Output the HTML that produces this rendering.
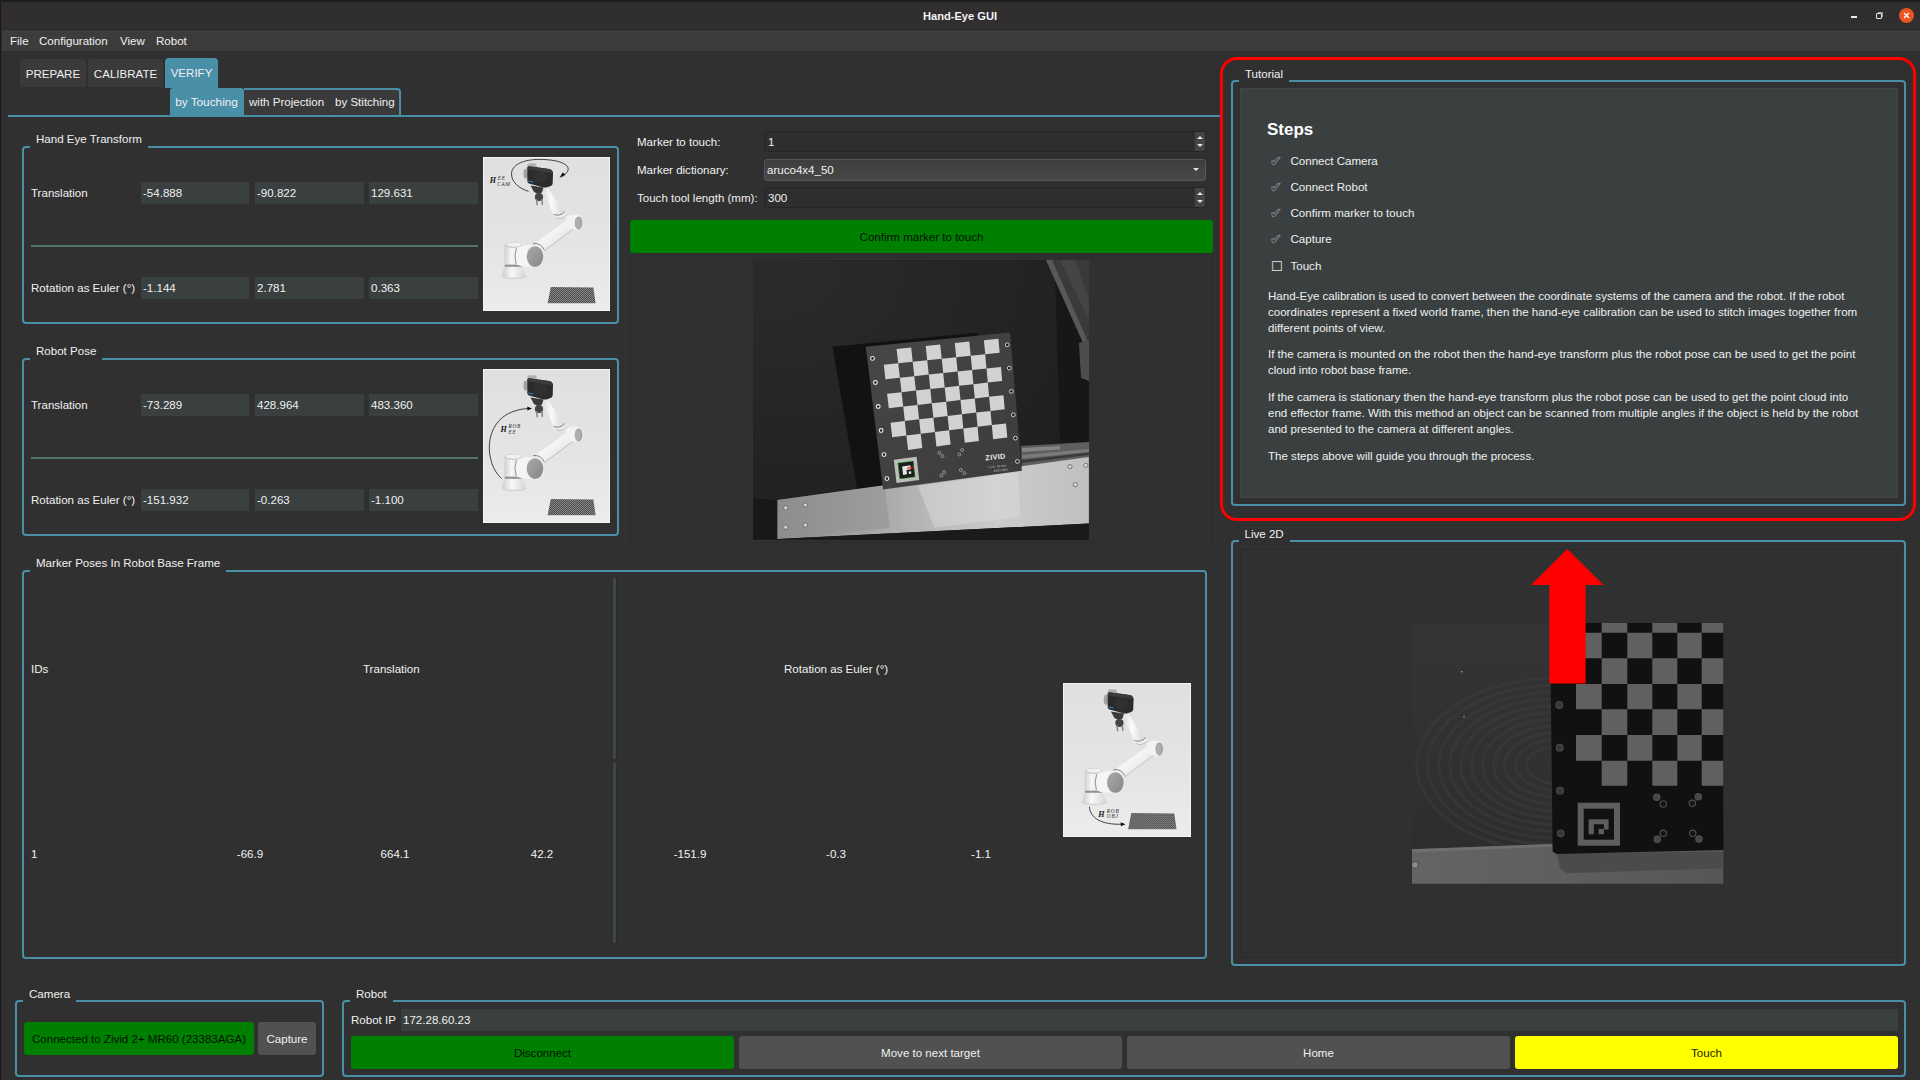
<!DOCTYPE html>
<html lang="en">
<head>
<meta charset="utf-8">
<title>Hand-Eye GUI</title>
<style>
*{box-sizing:border-box;margin:0;padding:0}
html,body{width:1920px;height:1080px;overflow:hidden}
body{position:relative;background:#303030;color:#f0f0f0;font-family:"Liberation Sans",sans-serif;font-size:11.55px;line-height:14px}
.abs{position:absolute}
.t{position:absolute;white-space:nowrap;line-height:14px}
#titlebar{left:0;top:0;width:1920px;height:30px;background:#302e2f;border-top:2px solid #1d1d1d;border-bottom:1px solid #262626}
#titlebar .ttl{left:0;width:1920px;top:7px;text-align:center;font-weight:bold;font-size:11.1px;color:#f4f4f4}
#menubar{left:0;top:30px;width:1920px;height:21px;background:#3c3c3c}
#edge{left:0;top:0;width:1px;height:1080px;background:#1f1520;box-shadow:1px 0 0 #2b2a2d}
.tab{position:absolute;background:#3a3a3a;border-radius:3px 3px 0 0;font-size:11.55px;text-align:center;color:#f0f0f0}
.tab.sel{background:#4a8fa8}
.gb{position:absolute;border:2px solid #4a8fa8;border-radius:4px}
.gbt{position:absolute;background:#303030;padding:0 6px;height:18px;line-height:14px;white-space:nowrap;color:#f0f0f0}
.fld{position:absolute;background:#3a4040;height:22px;line-height:22px;padding-left:2px;color:#f0f0f0;white-space:nowrap}
.sep{position:absolute;height:2px;background:#54726f}
.btn{position:absolute;border-radius:3px;text-align:center;white-space:nowrap}
.gray{background:#515151;color:#f0f0f0}
.green{background:#008000;color:#031003}
.yellow{background:#ffff00;color:#1a1a00}
.spin{position:absolute;background:#2e2e2e;border:1px solid #262626;border-radius:2px;height:21px;line-height:21px;padding-left:3px}
.spin .sb{position:absolute;right:0;top:0;width:10px;height:19px;background:#454545;border-radius:0 2px 2px 0}
.tri-u{position:absolute;width:0;height:0;border-left:3px solid transparent;border-right:3px solid transparent;border-bottom:3px solid #e6e6e6}
.tri-d{position:absolute;width:0;height:0;border-left:3px solid transparent;border-right:3px solid transparent;border-top:3px solid #e6e6e6}
.p{position:absolute;left:1268px;width:640px;white-space:nowrap;line-height:16px;color:#f0f0f0}
.step{position:absolute;left:1290.5px;white-space:nowrap}
.chk{position:absolute;left:1270px;color:#3a4040;-webkit-text-stroke:0.7px #8f9494;font-family:"DejaVu Sans",sans-serif;font-size:14px}
</style>
</head>
<body>
<!--DEFS--><svg width="0" height="0" style="position:absolute">
<defs>
<linearGradient id="rbg" x1="0" y1="0" x2="0" y2="1"><stop offset="0" stop-color="#e0e0e0"/><stop offset="0.55" stop-color="#e4e4e4"/><stop offset="1" stop-color="#ececec"/></linearGradient>
<linearGradient id="tube" x1="0" y1="0" x2="1" y2="1"><stop offset="0" stop-color="#ffffff"/><stop offset="0.5" stop-color="#f2f2f2"/><stop offset="1" stop-color="#cdcdcd"/></linearGradient>
<linearGradient id="tube2" x1="0" y1="0" x2="1" y2="0"><stop offset="0" stop-color="#dcdcdc"/><stop offset="0.4" stop-color="#fafafa"/><stop offset="1" stop-color="#d2d2d2"/></linearGradient>
<linearGradient id="col" x1="0" y1="0" x2="1" y2="0"><stop offset="0" stop-color="#cfcfcf"/><stop offset="0.4" stop-color="#f8f8f8"/><stop offset="1" stop-color="#d6d6d6"/></linearGradient>
<linearGradient id="cap" x1="0" y1="0" x2="1" y2="1"><stop offset="0" stop-color="#a9a9a9"/><stop offset="1" stop-color="#868686"/></linearGradient>
<pattern id="mesh" width="2" height="2" patternUnits="userSpaceOnUse"><rect width="2" height="2" fill="#4e4e4e"/><rect width="1" height="1" fill="#858585"/><rect x="1" y="1" width="1" height="1" fill="#858585"/></pattern>
<symbol id="robot" viewBox="0 0 127 154">
  <rect x="0" y="0" width="127" height="154" fill="#f4f4f4"/>
  <rect x="1" y="1" width="125" height="152" fill="url(#rbg)"/>
  <ellipse cx="31" cy="119.6" rx="13" ry="2.6" fill="#d6d6d6"/>
  <!-- mat -->
  <polygon points="64.2,147.4 112.8,147.4 110.4,130.4 67.8,129.8" fill="#f0f0f0"/>
  <polygon points="64.6,146.2 112.6,146.2 110.4,130.6 67.8,129.9" fill="url(#mesh)"/>
  <!-- base skirt -->
  <path d="M21.1,109.5 L39.3,109.5 L42.8,118 Q42.4,120.6 31,120.6 Q19.8,120.6 19.4,118 Z" fill="url(#col)"/>
  <rect x="21.6" y="107.2" width="17.2" height="2.6" rx="1" fill="#8f8f8f"/>
  <!-- base column -->
  <path d="M21.5,88 L38.9,88 L38.9,107.6 L21.5,107.6 Z" fill="url(#col)"/>
  <ellipse cx="30.2" cy="88" rx="8.7" ry="2.9" fill="#c9c9c9"/>
  <ellipse cx="30.6" cy="87.6" rx="7.6" ry="2.1" fill="#f1f1f1"/>
  <!-- shoulder horizontal cylinder -->
  <path d="M32.5,91.5 Q40,87 52,88.6 L52,109.6 Q40,110.5 32.5,107 Z" fill="#f5f5f5"/>
  <path d="M33.4,91.2 Q30.6,99 33.2,107.2" fill="none" stroke="#7a7a7a" stroke-width="0.8"/>
  <!-- upper arm -->
  <path d="M52.5,86 L85.6,61.8 L91.8,71 L60,94.5 Z" fill="url(#tube)"/>
  <path d="M60,94.5 L91.8,71" stroke="#bdbdbd" stroke-width="0.9"/>
  <!-- shoulder cap -->
  <ellipse cx="52.2" cy="99.2" rx="9.2" ry="11.2" fill="#efefef"/>
  <ellipse cx="52" cy="99.6" rx="8.3" ry="10.4" fill="url(#cap)"/>
  <path d="M50.2,86.6 Q57.6,85.6 61.2,92.6" fill="none" stroke="#666" stroke-width="0.8"/>
  <!-- elbow -->
  <path d="M82.5,60.5 Q88,55.5 96.5,58.6 L97.6,72 Q91,74.6 86,70.6 Z" fill="#f3f3f3"/>
  <ellipse cx="95.5" cy="66" rx="3.7" ry="6.4" fill="#9c9c9c"/>
  <ellipse cx="94.9" cy="66" rx="3" ry="5.7" fill="#aeaeae"/>
  <!-- forearm (tapered) -->
  <path d="M59.3,32.6 L65,31.2 L82,57.2 L73.2,63.2 Z" fill="url(#tube2)"/>
  <path d="M72,60.2 Q78,64.6 85,58 L82.3,54 Q77,59.6 70.6,57.2 Z" fill="#ededed"/>
  <path d="M70.9,57.4 Q77,60 82.2,54.4" fill="none" stroke="#777" stroke-width="0.9"/>
  <path d="M72.6,60.6 Q78.2,63.6 84.4,57.6" fill="none" stroke="#999" stroke-width="0.6"/>
  <!-- gripper -->
  <path d="M47.5,28.6 L60.5,30.4 L59,35.5 L55,37 L51,35 Z" fill="#3a3a3a"/>
  <circle cx="56" cy="40" r="4.1" fill="#444"/>
  <path d="M52.6,42 L54.4,42.4 L55,48.2 L53.6,48.4 Z M58,42.6 L59.6,42 L60.2,47.8 L58.8,48.2 Z" fill="#7f8a96"/>
  <!-- mount -->
  <rect x="44.4" y="6.2" width="9.2" height="5" rx="2" fill="#b2b2b2"/>
  <ellipse cx="42.6" cy="16.8" rx="2.2" ry="5" fill="#a2a2a2"/>
  <!-- camera -->
  <path d="M46.2,9.2 L66,12 Q69.8,12.8 70,16.2 L69.7,26.6 Q69.5,28.6 67,29.2 L64,30.3 Q62,30.8 59.6,30.2 L46,26.4 Q44.3,25.8 44.3,24 L44.3,11 Q44.6,9 46.2,9.2 Z" fill="#2b2b2b"/>
  <ellipse cx="57.5" cy="20.5" rx="6.5" ry="6" fill="#313131"/>
  <path d="M46.2,9.2 L66,12 Q69.8,12.8 70,16.2 L57,14.6 L44.3,12.2 L44.3,11 Q44.6,9 46.2,9.2 Z" fill="#3c3c3c"/>
  <rect x="45.2" y="23.6" width="5.4" height="0.9" fill="#3b82b4" transform="rotate(10 45.2 23.6)"/>
</symbol>
</defs>
</svg>
<!--/DEFS-->
<!-- window chrome -->
<div id="titlebar" class="abs">
  <div class="t ttl">Hand-Eye GUI</div>
  <!-- window buttons -->
  <div class="abs" style="left:1850.5px;top:14.3px;width:6.5px;height:1.5px;background:#e8e8e8"></div>
  <div class="abs" style="left:1876px;top:11px;width:6px;height:6px;border:1.5px solid #e8e8e8;border-radius:1px"></div>
  <div class="abs" style="left:1878px;top:9.5px;width:5px;height:5px;border-top:1px solid #9a9a9a;border-right:1px solid #9a9a9a"></div>
  <div class="abs" style="left:1899px;top:6px;width:15px;height:15px;border-radius:50%;background:#e95420"></div>
  <svg class="abs" style="left:1899px;top:6px" width="15" height="15" viewBox="0 0 15 15"><path d="M5 5 L10 10 M10 5 L5 10" stroke="#fff" stroke-width="1.4" fill="none"/></svg>
</div>
<div id="menubar" class="abs">
  <div class="t" style="left:10px;top:4px">File</div>
  <div class="t" style="left:39px;top:4px">Configuration</div>
  <div class="t" style="left:120px;top:4px">View</div>
  <div class="t" style="left:156px;top:4px">Robot</div>
</div>
<div id="edge" class="abs"></div>

<!-- main tabs -->
<div class="tab" style="left:20px;top:59px;width:66px;height:28px;line-height:30px">PREPARE</div>
<div class="tab" style="left:88px;top:59px;width:75px;height:28px;line-height:30px">CALIBRATE</div>
<div class="tab sel" style="left:165px;top:58px;width:53px;height:30px;line-height:31px;border-radius:4px 4px 0 0">VERIFY</div>
<!-- sub tabs -->
<div class="abs" style="left:8px;top:115px;width:1214px;height:2px;background:#4a8fa8"></div>
<div class="abs" style="left:244px;top:88px;width:157px;height:27px;background:#3a3a3a;border-top:2px solid #4a8fa8;border-right:2px solid #4a8fa8;border-radius:0 4px 0 0"></div>
<div class="abs" style="left:329px;top:90px;width:1px;height:25px;background:#363636"></div>
<div class="tab sel" style="left:170px;top:88px;width:74px;height:28px;line-height:28px;font-size:11.8px;text-indent:-1px">by Touching</div>
<div class="t" style="left:249px;top:95px">with Projection</div>
<div class="t" style="left:335px;top:95px">by Stitching</div>

<!-- Hand Eye Transform -->
<div class="gb" style="left:22px;top:146px;width:597px;height:178px"></div>
<div class="gbt" style="left:30px;top:132px">Hand Eye Transform</div>
<div class="t" style="left:31px;top:186px">Translation</div>
<div class="fld" style="left:141px;top:182px;width:108px">-54.888</div>
<div class="fld" style="left:255px;top:182px;width:109px">-90.822</div>
<div class="fld" style="left:369px;top:182px;width:109px">129.631</div>
<div class="sep" style="left:31px;top:244.5px;width:447px"></div>
<div class="t" style="left:31px;top:281px">Rotation as Euler (°)</div>
<div class="fld" style="left:141px;top:277px;width:108px">-1.144</div>
<div class="fld" style="left:255px;top:277px;width:109px">2.781</div>
<div class="fld" style="left:369px;top:277px;width:109px">0.363</div>
<!--ROBOT1--><svg class="abs" style="left:483px;top:157px" width="127" height="154" viewBox="0 0 127 154"><use href="#robot" width="127" height="154"/>
<path d="M45.6,34.4 C36,31.5 28.5,25 28.5,17 C28.5,8 40,2.4 56.3,2.4 C72,2.4 85.2,6 85.2,12 C85.2,15 82,18 78.6,19.8" fill="none" stroke="#1a1a1a" stroke-width="0.8"/><polygon points="76.4,21 82.4,17.6 79.6,15.6" fill="#111"/>
<g opacity="0.97"><text x="6.8" y="26.4" font-family="'Liberation Serif',serif" font-weight="bold" font-style="italic" font-size="8" fill="#111">H</text><text x="14.8" y="22.6" font-family="'Liberation Serif',serif" font-style="italic" font-size="5.2" letter-spacing="0.9" fill="#1c1c1c">EE</text><text x="14.2" y="28.6" font-family="'Liberation Serif',serif" font-style="italic" font-size="5.2" letter-spacing="0.9" fill="#1c1c1c">CAM</text></g></svg><!--/ROBOT1-->

<!-- Robot Pose -->
<div class="gb" style="left:22px;top:358px;width:597px;height:178px"></div>
<div class="gbt" style="left:30px;top:344px">Robot Pose</div>
<div class="t" style="left:31px;top:398px">Translation</div>
<div class="fld" style="left:141px;top:394px;width:108px">-73.289</div>
<div class="fld" style="left:255px;top:394px;width:109px">428.964</div>
<div class="fld" style="left:369px;top:394px;width:109px">483.360</div>
<div class="sep" style="left:31px;top:456.5px;width:447px"></div>
<div class="t" style="left:31px;top:493px">Rotation as Euler (°)</div>
<div class="fld" style="left:141px;top:489px;width:108px">-151.932</div>
<div class="fld" style="left:255px;top:489px;width:109px">-0.263</div>
<div class="fld" style="left:369px;top:489px;width:109px">-1.100</div>
<!--ROBOT2--><svg class="abs" style="left:483px;top:369px" width="127" height="154" viewBox="0 0 127 154"><use href="#robot" width="127" height="154"/>
<path d="M18.5,109.5 C2,95 -1,54 30,42.5 Q38,39.6 46,39.4" fill="none" stroke="#1a1a1a" stroke-width="0.8"/><polygon points="49,39.4 44.2,37.4 44.4,41.4" fill="#111"/>
<g opacity="0.97"><text x="17.5" y="62.8" font-family="'Liberation Serif',serif" font-weight="bold" font-style="italic" font-size="8" fill="#111">H</text><text x="25.4" y="59.2" font-family="'Liberation Serif',serif" font-style="italic" font-size="5.2" letter-spacing="0.9" fill="#1c1c1c">ROB</text><text x="25.4" y="64.6" font-family="'Liberation Serif',serif" font-style="italic" font-size="5.2" letter-spacing="0.9" fill="#1c1c1c">EE</text></g></svg><!--/ROBOT2-->

<!-- Marker form -->
<div class="t" style="left:637px;top:135px">Marker to touch:</div>
<div class="spin" style="left:764px;top:131px;width:442px">1<div class="sb"><div class="tri-u" style="left:2px;top:4px"></div><div class="tri-d" style="left:2px;top:12px"></div></div></div>
<div class="t" style="left:637px;top:163px">Marker dictionary:</div>
<div class="abs" style="left:764px;top:159px;width:442px;height:22px;border:1px solid #565656;border-radius:3px;background:linear-gradient(#3e3e3e,#484848);line-height:20px;padding-left:2px">aruco4x4_50<div class="tri-d" style="right:6px;top:8px"></div></div>
<div class="t" style="left:637px;top:191px">Touch tool length (mm):</div>
<div class="spin" style="left:764px;top:187px;width:442px">300<div class="sb"><div class="tri-u" style="left:2px;top:4px"></div><div class="tri-d" style="left:2px;top:12px"></div></div></div>
<div class="btn green" style="left:630px;top:220px;width:583px;height:33px;line-height:34px">Confirm marker to touch</div>
<div class="abs" style="left:630px;top:257px;width:583px;height:286px;border:1px solid #2b2b2b;background:#303030"></div>
<!--CAMIMG--><svg class="abs" style="left:753px;top:260px" width="336" height="280" viewBox="753 260 336 280">
<defs><radialGradient id="cbg" cx="0.08" cy="0.02" r="1.15"><stop offset="0" stop-color="#2b2b2b"/><stop offset="0.4" stop-color="#262626"/><stop offset="1" stop-color="#1e1e1e"/></radialGradient><linearGradient id="plate" x1="0" y1="0" x2="1" y2="0"><stop offset="0" stop-color="#8a8a8a"/><stop offset="0.3" stop-color="#a6a6a6"/><stop offset="0.7" stop-color="#cbcbcb"/><stop offset="1" stop-color="#c0c0c0"/></linearGradient><linearGradient id="brd" x1="0" y1="0" x2="1" y2="1"><stop offset="0" stop-color="#474747"/><stop offset="1" stop-color="#3b3b3b"/></linearGradient></defs>
<rect x="753" y="260" width="336" height="280" fill="url(#cbg)"/>
<polygon points="1055.0,268.0 1089.0,268.0 1089.0,444.0 1060.0,446.0" fill="#171717"/>
<polygon points="1046.0,260.0 1089.0,260.0 1089.0,356.0" fill="#3a3a3a"/>
<polygon points="1046.0,260.0 1052.0,260.0 1089.0,344.0 1089.0,356.0" fill="#585858"/>
<polygon points="1060.0,260.0 1075.0,260.0 1089.0,300.0 1089.0,320.0" fill="#444"/>
<polygon points="1079.0,343.0 1089.0,340.0 1089.0,381.0 1081.0,378.0" fill="#4d4d4d"/>
<polygon points="1021.0,446.0 1089.0,442.0 1089.0,457.0 1022.0,470.0" fill="#5e5e5e"/>
<polygon points="1022.0,448.0 1060.0,446.0 1060.0,449.5 1022.0,452.0" fill="#858585"/>
<polygon points="1022.0,455.0 1089.0,449.0 1089.0,452.0 1022.0,458.5" fill="#7a7a7a"/>
<polygon points="1022.0,460.0 1089.0,452.5 1089.0,455.0 1022.0,463.0" fill="#3a3a3a"/>
<polygon points="832.5,346.7 870.6,343.1 977.5,332.5 978.9,341.7 884.4,489.4 858.1,494.4" fill="#121212"/>
<polygon points="753.3,498.6 777.5,500.0 777.5,539.4 753.3,539.4" fill="#181818"/>
<polygon points="777.5,500.0 1088.9,456.9 1088.9,523.6 777.5,538.9" fill="url(#plate)"/>
<polygon points="777.5,538.9 1088.9,523.6 1088.9,539.4 777.5,539.4" fill="#1a1a1a"/>
<polygon points="917.8,486.1 1017.8,472.2 1020.6,516.7 934.4,527.8" fill="#dcdcdc" opacity="0.5"/>
<polygon points="777.5,500.0 884.4,485.6 890.0,527.8 777.5,538.9" fill="#8f8f8f" opacity="0.5"/>
<circle cx="785.8" cy="507.8" r="2.1" fill="#d8d8d8" stroke="#6a6a6a" stroke-width="0.9"/>
<circle cx="805.3" cy="505.0" r="2.1" fill="#d8d8d8" stroke="#6a6a6a" stroke-width="0.9"/>
<circle cx="785.8" cy="527.2" r="2.1" fill="#d8d8d8" stroke="#6a6a6a" stroke-width="0.9"/>
<circle cx="805.3" cy="525.0" r="2.1" fill="#d8d8d8" stroke="#6a6a6a" stroke-width="0.9"/>
<circle cx="1070.0" cy="466.7" r="2.1" fill="#d8d8d8" stroke="#6a6a6a" stroke-width="0.9"/>
<circle cx="1085.8" cy="465.3" r="2.1" fill="#d8d8d8" stroke="#6a6a6a" stroke-width="0.9"/>
<circle cx="1075.3" cy="484.7" r="2.1" fill="#d8d8d8" stroke="#6a6a6a" stroke-width="0.9"/>
<polygon points="865.8,346.7 1010.0,332.5 1021.9,470.8 883.1,489.4" fill="url(#brd)"/>
<path d="M896.6,348.9L911.2,347.4L912.7,361.8L898.2,363.3ZM925.7,346.0L940.2,344.5L941.7,358.8L927.2,360.3ZM954.8,343.1L969.3,341.6L970.7,355.8L956.2,357.3ZM983.9,340.2L998.4,338.7L999.7,352.8L985.2,354.3ZM883.8,364.8L898.2,363.3L899.9,377.7L885.4,379.3ZM912.7,361.8L927.2,360.3L928.8,374.6L914.3,376.2ZM941.7,358.8L956.2,357.3L957.6,371.6L943.2,373.1ZM970.7,355.8L985.2,354.3L986.5,368.5L972.1,370.0ZM899.9,377.7L914.3,376.2L915.9,390.6L901.5,392.2ZM928.8,374.6L943.2,373.1L944.7,387.4L930.3,389.0ZM957.6,371.6L972.1,370.0L973.4,384.2L959.1,385.8ZM986.5,368.5L1001.0,367.0L1002.2,381.1L987.8,382.6ZM887.1,393.7L901.5,392.2L903.2,406.6L888.8,408.2ZM915.9,390.6L930.3,389.0L931.8,403.3L917.5,405.0ZM944.7,387.4L959.1,385.8L960.5,400.1L946.2,401.7ZM973.4,384.2L987.8,382.6L989.1,396.8L974.8,398.4ZM903.2,406.6L917.5,405.0L919.1,419.3L904.8,421.0ZM931.8,403.3L946.2,401.7L947.6,416.0L933.4,417.7ZM960.5,400.1L974.8,398.4L976.2,412.6L961.9,414.3ZM989.1,396.8L1003.5,395.2L1004.7,409.3L990.5,411.0ZM890.5,422.7L904.8,421.0L906.4,435.5L892.2,437.2ZM919.1,419.3L933.4,417.7L934.9,432.0L920.7,433.7ZM947.6,416.0L961.9,414.3L963.3,428.6L949.1,430.3ZM976.2,412.6L990.5,411.0L991.8,425.1L977.6,426.8ZM906.4,435.5L920.7,433.7L922.3,448.1L908.1,449.9ZM934.9,432.0L949.1,430.3L950.6,444.6L936.4,446.4ZM963.3,428.6L977.6,426.8L978.9,441.0L964.8,442.8ZM991.8,425.1L1006.0,423.4L1007.3,437.5L993.1,439.3Z" fill="#d2d2d2"/>
<circle cx="872.5" cy="358.4" r="1.9" fill="#1c1c1c" stroke="#f0f0f0" stroke-width="1.1"/>
<circle cx="1007.2" cy="344.8" r="1.9" fill="#1c1c1c" stroke="#d4d4d4" stroke-width="1"/>
<circle cx="875.4" cy="382.5" r="1.9" fill="#1c1c1c" stroke="#f0f0f0" stroke-width="1.1"/>
<circle cx="1009.3" cy="368.1" r="1.9" fill="#1c1c1c" stroke="#d4d4d4" stroke-width="1"/>
<circle cx="878.2" cy="406.5" r="1.9" fill="#1c1c1c" stroke="#f0f0f0" stroke-width="1.1"/>
<circle cx="1011.3" cy="391.4" r="1.9" fill="#1c1c1c" stroke="#d4d4d4" stroke-width="1"/>
<circle cx="881.1" cy="430.5" r="1.9" fill="#1c1c1c" stroke="#f0f0f0" stroke-width="1.1"/>
<circle cx="1013.3" cy="414.8" r="1.9" fill="#1c1c1c" stroke="#d4d4d4" stroke-width="1"/>
<circle cx="884.0" cy="454.6" r="1.9" fill="#1c1c1c" stroke="#f0f0f0" stroke-width="1.1"/>
<circle cx="1015.4" cy="438.1" r="1.9" fill="#1c1c1c" stroke="#d4d4d4" stroke-width="1"/>
<circle cx="886.9" cy="478.6" r="1.9" fill="#1c1c1c" stroke="#f0f0f0" stroke-width="1.1"/>
<circle cx="1017.4" cy="461.4" r="1.9" fill="#1c1c1c" stroke="#d4d4d4" stroke-width="1"/>
<circle cx="939.4" cy="452.8" r="1.5" fill="none" stroke="#b5b5b5" stroke-width="0.7"/>
<circle cx="942.5" cy="456.1" r="1.5" fill="none" stroke="#b5b5b5" stroke-width="0.7"/>
<circle cx="959.4" cy="454.4" r="1.5" fill="none" stroke="#b5b5b5" stroke-width="0.7"/>
<circle cx="962.2" cy="450.0" r="1.5" fill="none" stroke="#b5b5b5" stroke-width="0.7"/>
<circle cx="944.2" cy="472.2" r="1.5" fill="none" stroke="#b5b5b5" stroke-width="0.7"/>
<circle cx="941.4" cy="475.6" r="1.5" fill="none" stroke="#b5b5b5" stroke-width="0.7"/>
<circle cx="960.8" cy="470.0" r="1.5" fill="none" stroke="#b5b5b5" stroke-width="0.7"/>
<circle cx="964.4" cy="473.1" r="1.5" fill="none" stroke="#b5b5b5" stroke-width="0.7"/>
<polygon points="893.8,459.7 916.6,456.8 919.2,480.1 896.5,483.1" fill="#bdbdbd" />
<polygon points="897.8,462.9 913.4,460.9 915.2,476.9 899.7,478.9" fill="#1d1d1d" />
<polygon points="902.1,466.4 910.4,465.3 910.8,469.3 906.5,469.9 907.0,474.3 903.1,474.9" fill="#e4e4e4" />
<polygon points="908.6,471.6 911.1,471.3 911.3,473.8 908.9,474.1" fill="#e4e4e4" />
<polygon points="897.8,462.9 913.4,460.9 915.2,476.9 899.7,478.9" fill="none" stroke="#18d018" stroke-width="0.9" stroke-dasharray="1.6 1.6"/>
<text x="906.9" y="469.3" transform="rotate(-6 906.9 469.3)" font-family="'Liberation Sans',sans-serif" font-size="3.8" font-weight="bold" fill="#ff2020">id=1</text>
<g transform="translate(985.6 460.6) rotate(-6)"><text x="0" y="0" font-family="'Liberation Sans',sans-serif" font-size="7.4" font-weight="bold" fill="#ececec" letter-spacing="0.3">ZIVID</text><text x="1.5" y="8" font-family="'Liberation Sans',sans-serif" font-size="3" fill="#cfcfcf">7 x 8 - 30 mm</text><text x="6.8" y="12.2" font-family="'Liberation Sans',sans-serif" font-size="3" fill="#cfcfcf">ZVD-CB01</text></g>
</svg><!--/CAMIMG-->

<!-- Marker Poses -->
<div class="gb" style="left:22px;top:570px;width:1185px;height:389px"></div>
<div class="gbt" style="left:30px;top:556px">Marker Poses In Robot Base Frame</div>
<div class="abs" style="left:613px;top:578px;width:3px;height:181px;background:#3c4747;border-right:0;box-shadow:1px 0 0 #2a2a2a"></div>
<div class="abs" style="left:613px;top:763px;width:3px;height:180px;background:#3c4747;box-shadow:1px 0 0 #2a2a2a"></div>
<div class="t" style="left:31px;top:662px">IDs</div>
<div class="t" style="left:363px;top:662px">Translation</div>
<div class="t" style="left:784px;top:662px">Rotation as Euler (°)</div>
<div class="t" style="left:31px;top:847px">1</div>
<div class="t" style="left:200px;top:847px;width:100px;text-align:center">-66.9</div>
<div class="t" style="left:345px;top:847px;width:100px;text-align:center">664.1</div>
<div class="t" style="left:492px;top:847px;width:100px;text-align:center">42.2</div>
<div class="t" style="left:640px;top:847px;width:100px;text-align:center">-151.9</div>
<div class="t" style="left:786px;top:847px;width:100px;text-align:center">-0.3</div>
<div class="t" style="left:931px;top:847px;width:100px;text-align:center">-1.1</div>
<!--ROBOT3--><svg class="abs" style="left:1063px;top:683px" width="128" height="154" viewBox="0 0 127 154" preserveAspectRatio="none"><use href="#robot" width="127" height="154"/>
<path d="M26.2,123.7 C27,135 38,142 59,141.2" fill="none" stroke="#1a1a1a" stroke-width="0.8"/><polygon points="62,141.2 57.2,139.2 57.4,143.2" fill="#111"/>
<g opacity="0.97"><text x="35" y="133.8" font-family="'Liberation Serif',serif" font-weight="bold" font-style="italic" font-size="8" fill="#111">H</text><text x="43.4" y="130" font-family="'Liberation Serif',serif" font-style="italic" font-size="5.2" letter-spacing="0.9" fill="#1c1c1c">ROB</text><text x="43.4" y="135.4" font-family="'Liberation Serif',serif" font-style="italic" font-size="5.2" letter-spacing="0.9" fill="#1c1c1c">OBJ</text></g></svg><!--/ROBOT3-->

<!-- Camera -->
<div class="gb" style="left:15px;top:1000px;width:309px;height:77px"></div>
<div class="gbt" style="left:23px;top:987px">Camera</div>
<div class="btn green" style="left:24px;top:1022px;width:230px;height:33px;line-height:34px">Connected to Zivid 2+ MR60 (23383AGA)</div>
<div class="btn gray" style="left:258px;top:1022px;width:58px;height:33px;line-height:34px">Capture</div>

<!-- Robot -->
<div class="gb" style="left:342px;top:1000px;width:1564px;height:77px"></div>
<div class="gbt" style="left:350px;top:987px">Robot</div>
<div class="t" style="left:351px;top:1013px">Robot IP</div>
<div class="fld" style="left:401px;top:1009px;width:1497px">172.28.60.23</div>
<div class="btn green" style="left:351px;top:1036px;width:383px;height:33px;line-height:34px">Disconnect</div>
<div class="btn gray" style="left:739px;top:1036px;width:383px;height:33px;line-height:34px">Move to next target</div>
<div class="btn gray" style="left:1127px;top:1036px;width:383px;height:33px;line-height:34px">Home</div>
<div class="btn yellow" style="left:1515px;top:1036px;width:383px;height:33px;line-height:34px">Touch</div>

<!-- Tutorial -->
<div class="gb" style="left:1231px;top:80px;width:675px;height:426px"></div>
<div class="gbt" style="left:1239px;top:66.6px">Tutorial</div>
<div class="abs" style="left:1240px;top:88px;width:658px;height:410px;background:#3a4040;border:1px solid #3f4646"></div>
<div class="t" style="left:1267px;top:119.5px;font-size:17px;font-weight:bold;line-height:20px;color:#fff">Steps</div>
<div class="chk t" style="top:154px">✔</div><div class="step t" style="top:154px">Connect Camera</div>
<div class="chk t" style="top:180px">✔</div><div class="step t" style="top:180px">Connect Robot</div>
<div class="chk t" style="top:206px">✔</div><div class="step t" style="top:206px">Confirm marker to touch</div>
<div class="chk t" style="top:232px">✔</div><div class="step t" style="top:232px">Capture</div>
<div class="t" style="left:1271px;top:260px;font-family:'DejaVu Sans',sans-serif;font-size:13px;color:#ececec">☐</div><div class="step t" style="top:259px">Touch</div>
<div class="p" style="top:288px">Hand-Eye calibration is used to convert between the coordinate systems of the camera and the robot. If the robot<br>coordinates represent a fixed world frame, then the hand-eye calibration can be used to stitch images together from<br>different points of view.</div>
<div class="p" style="top:346.4px">If the camera is mounted on the robot then the hand-eye transform plus the robot pose can be used to get the point<br>cloud into robot base frame.</div>
<div class="p" style="top:389px">If the camera is stationary then the hand-eye transform plus the robot pose can be used to get the point cloud into<br>end effector frame. With this method an object can be scanned from multiple angles if the object is held by the robot<br>and presented to the camera at different angles.</div>
<div class="p" style="top:447.5px">The steps above will guide you through the process.</div>

<!-- Live 2D -->
<div class="gb" style="left:1231px;top:540px;width:675px;height:426px"></div>
<div class="gbt" style="left:1238.5px;top:527px">Live 2D</div>
<div class="abs" style="left:1240px;top:549px;width:658px;height:409px;border:1px solid #2a2a2a"></div>
<!--LIVEIMG--><svg class="abs" style="left:1412px;top:623px" width="312" height="261" viewBox="1412 623 312 261">
<defs><linearGradient id="lbg" x1="0" y1="0" x2="0" y2="1"><stop offset="0" stop-color="#343434"/><stop offset="0.5" stop-color="#313131"/><stop offset="1" stop-color="#2c2c2c"/></linearGradient><linearGradient id="ltab" x1="0" y1="0" x2="1" y2="0"><stop offset="0" stop-color="#646464"/><stop offset="0.5" stop-color="#5e5e5e"/><stop offset="1" stop-color="#565656"/></linearGradient><clipPath id="lclip"><rect x="1412" y="623" width="140" height="230"/></clipPath></defs>
<rect x="1412" y="623" width="312" height="261" fill="url(#lbg)"/>
<g clip-path="url(#lclip)" fill="none" stroke="#3c3c3c" stroke-opacity="0.5"><ellipse cx="1556.7" cy="765.0" rx="30.0" ry="18.6" stroke-width="3.2"/><ellipse cx="1556.7" cy="765.0" rx="41.0" ry="25.4" stroke-width="3.2"/><ellipse cx="1556.7" cy="765.0" rx="52.0" ry="32.2" stroke-width="3.2"/><ellipse cx="1556.7" cy="765.0" rx="63.0" ry="39.1" stroke-width="3.2"/><ellipse cx="1556.7" cy="765.0" rx="74.0" ry="45.9" stroke-width="3.2"/><ellipse cx="1556.7" cy="765.0" rx="85.0" ry="52.7" stroke-width="3.2"/><ellipse cx="1556.7" cy="765.0" rx="96.0" ry="59.5" stroke-width="3.2"/><ellipse cx="1556.7" cy="765.0" rx="107.0" ry="66.3" stroke-width="3.2"/><ellipse cx="1556.7" cy="765.0" rx="118.0" ry="73.2" stroke-width="3.2"/><ellipse cx="1556.7" cy="765.0" rx="129.0" ry="80.0" stroke-width="3.2"/><ellipse cx="1556.7" cy="765.0" rx="140.0" ry="86.8" stroke-width="3.2"/></g>
<polygon points="1412.0,849.3 1551.7,844.0 1723.3,850.0 1723.3,883.7 1412.0,883.7" fill="url(#ltab)"/>
<polygon points="1556.7,853.3 1723.3,851.7 1723.3,868.3 1566.7,873.3 1560.0,868.3" fill="#4b4b4b"/>
<polygon points="1412.0,849.3 1551.7,844.0 1551.7,846.7 1412.0,852.3" fill="#7a7a7a" opacity="0.6"/>
<polygon points="1550.0,622.7 1723.3,622.7 1723.3,850.0 1556.7,854.0 1552.7,851.7" fill="#111"/>
<path d="M1601.7,622.7H1627.3V632.7H1601.7ZM1652.3,622.7H1677.3V632.7H1652.3ZM1701.7,622.7H1723.3V632.7H1701.7ZM1576.0,632.7H1601.7V658.3H1576.0ZM1627.3,632.7H1652.3V658.3H1627.3ZM1677.3,632.7H1701.7V658.3H1677.3ZM1601.7,658.3H1627.3V684.0H1601.7ZM1652.3,658.3H1677.3V684.0H1652.3ZM1701.7,658.3H1723.3V684.0H1701.7ZM1576.0,684.0H1601.7V709.3H1576.0ZM1627.3,684.0H1652.3V709.3H1627.3ZM1677.3,684.0H1701.7V709.3H1677.3ZM1601.7,709.3H1627.3V735.0H1601.7ZM1652.3,709.3H1677.3V735.0H1652.3ZM1701.7,709.3H1723.3V735.0H1701.7ZM1576.0,735.0H1601.7V760.7H1576.0ZM1627.3,735.0H1652.3V760.7H1627.3ZM1677.3,735.0H1701.7V760.7H1677.3ZM1601.7,760.7H1627.3V785.7H1601.7ZM1652.3,760.7H1677.3V785.7H1652.3ZM1701.7,760.7H1723.3V785.7H1701.7Z" fill="#606060"/>
<circle cx="1559.3" cy="705.0" r="3.3" fill="#363636" stroke="#4a4a4a" stroke-width="1.2"/>
<circle cx="1559.7" cy="747.7" r="3.3" fill="#363636" stroke="#4a4a4a" stroke-width="1.2"/>
<circle cx="1560.0" cy="790.7" r="3.3" fill="#363636" stroke="#4a4a4a" stroke-width="1.2"/>
<circle cx="1560.7" cy="833.3" r="3.3" fill="#363636" stroke="#4a4a4a" stroke-width="1.2"/>
<rect x="1577.7" y="802.7" width="42.3" height="43.0" fill="#5e5e5e"/>
<rect x="1583.7" y="808.7" width="30.3" height="31.0" fill="#111"/>
<polygon points="1588.6,819.2 1608.6,819.2 1608.6,829.4 1603.9,829.4 1603.9,824.2 1593.9,824.2 1593.9,834.2 1588.6,834.2" fill="#5e5e5e"/>
<polygon points="1598.6,828.9 1603.9,828.9 1603.9,834.2 1598.6,834.2" fill="#5e5e5e"/>
<circle cx="1656.7" cy="797.3" r="3.2" fill="#464646" stroke="#505050" stroke-width="1.1"/>
<circle cx="1663.3" cy="804.0" r="3.2" fill="#141414" stroke="#505050" stroke-width="1.1"/>
<circle cx="1698.3" cy="796.7" r="3.2" fill="#464646" stroke="#505050" stroke-width="1.1"/>
<circle cx="1692.3" cy="803.3" r="3.2" fill="#141414" stroke="#505050" stroke-width="1.1"/>
<circle cx="1663.3" cy="833.3" r="3.2" fill="#141414" stroke="#505050" stroke-width="1.1"/>
<circle cx="1657.3" cy="839.3" r="3.2" fill="#464646" stroke="#505050" stroke-width="1.1"/>
<circle cx="1692.7" cy="833.3" r="3.2" fill="#141414" stroke="#505050" stroke-width="1.1"/>
<circle cx="1699.0" cy="839.0" r="3.2" fill="#464646" stroke="#505050" stroke-width="1.1"/>
<circle cx="1415.0" cy="865.0" r="3.5" fill="#8a8a8a" stroke="#4a4a4a" stroke-width="1"/>
<circle cx="1461.7" cy="671.7" r="0.7" fill="#bdbdbd"/>
<circle cx="1464.0" cy="716.7" r="0.7" fill="#bdbdbd"/>
</svg><!--/LIVEIMG-->

<!-- red highlight + arrow -->
<div class="abs" style="left:1219.6px;top:56.8px;width:696.2px;height:464.4px;border:3.4px solid #ff0000;border-radius:17px"></div>
<svg class="abs" style="left:1520px;top:540px" width="100" height="150" viewBox="1520 540 100 150"><polygon points="1567.3,549 1603.5,585 1585.6,585 1585.6,683.6 1549.4,683.6 1549.4,585 1531,585" fill="#ff0000"/></svg>
</body>
</html>
